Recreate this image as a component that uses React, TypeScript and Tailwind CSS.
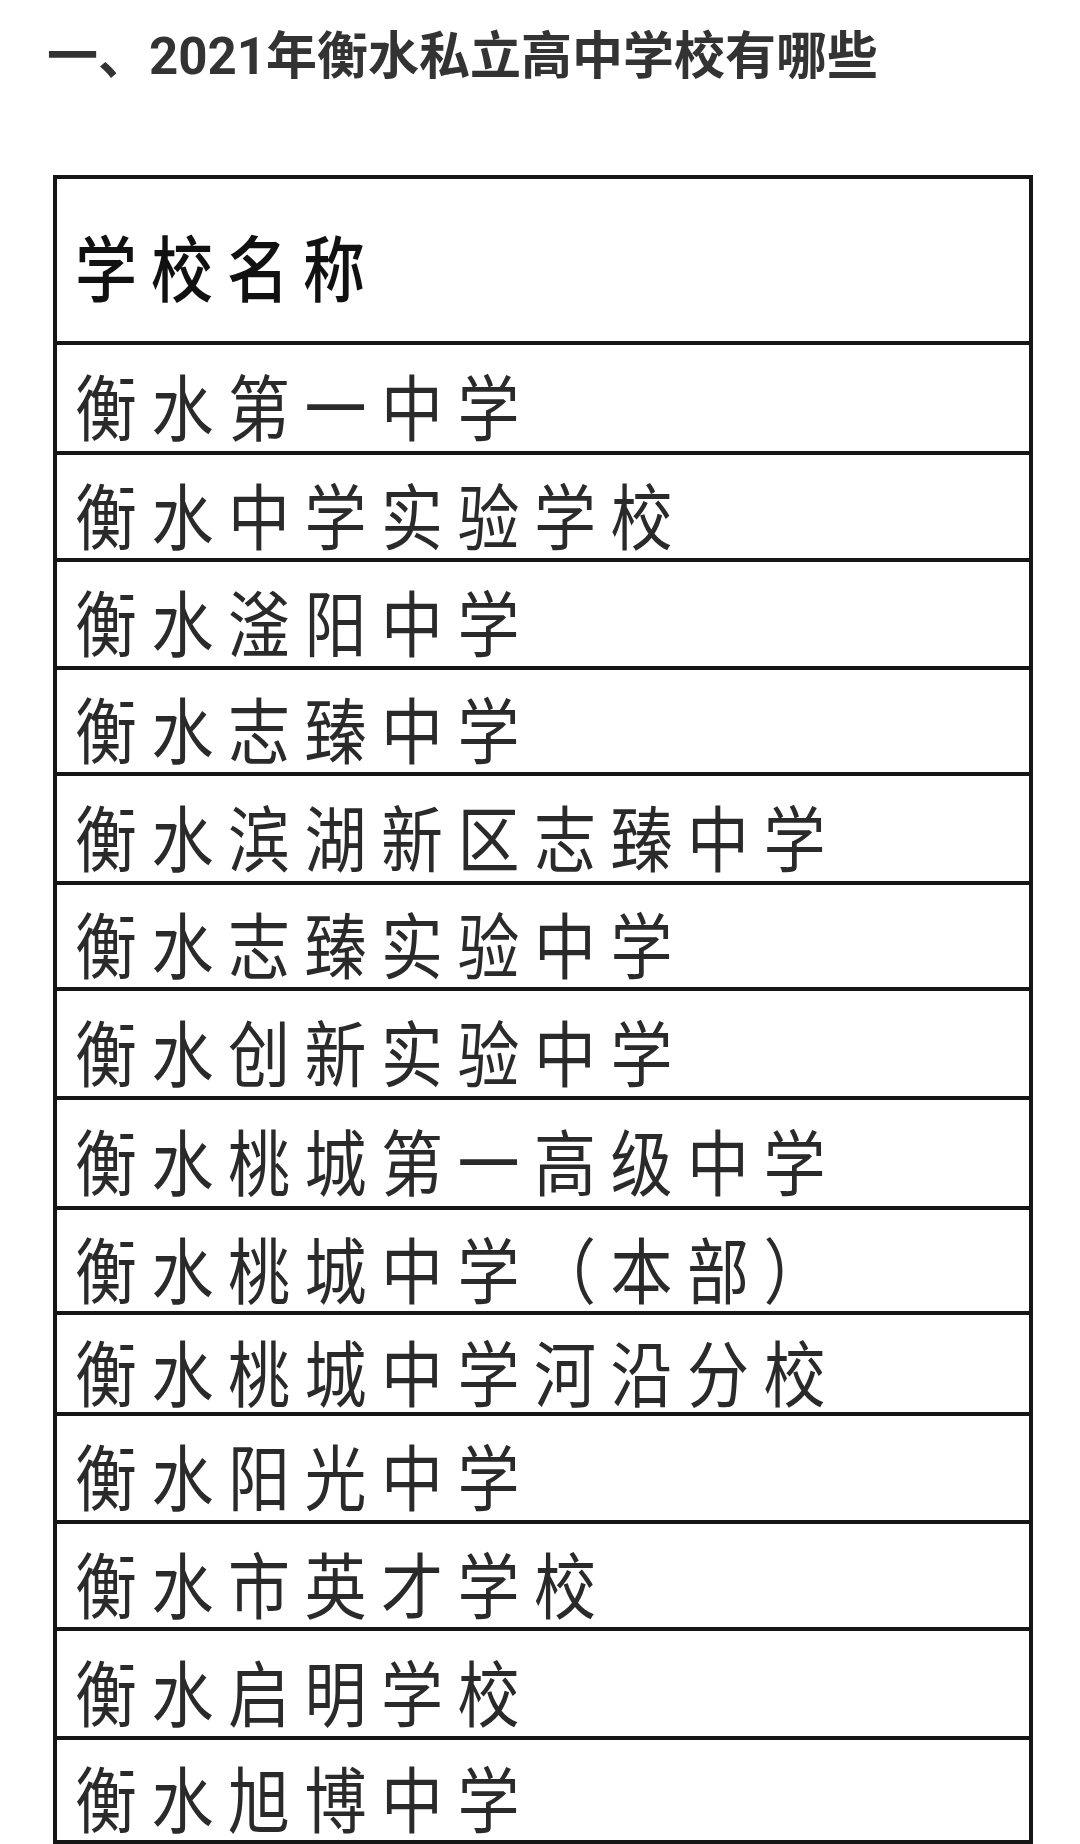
import React from "react";

const rows: { name: string; h: string }[] = [
  { name: "衡水第一中学", h: "h-[110px]" },
  { name: "衡水中学实验学校", h: "h-[107px]" },
  { name: "衡水滏阳中学", h: "h-[108px]" },
  { name: "衡水志臻中学", h: "h-[106px]" },
  { name: "衡水滨湖新区志臻中学", h: "h-[109px]" },
  { name: "衡水志臻实验中学", h: "h-[106px]" },
  { name: "衡水创新实验中学", h: "h-[109px]" },
  { name: "衡水桃城第一高级中学", h: "h-[110px]" },
  { name: "衡水桃城中学（本部）", h: "h-[105px]" },
  { name: "衡水桃城中学河沿分校", h: "h-[101px]" },
  { name: "衡水阳光中学", h: "h-[108px]" },
  { name: "衡水市英才学校", h: "h-[107px]" },
  { name: "衡水启明学校", h: "h-[109px]" },
  { name: "衡水旭博中学", h: "h-[104px]" },
];

export default function App() {
  return (
    <div className="w-[1080px] h-[1844px] bg-white overflow-hidden font-['Roboto','Noto_Sans_CJK_SC',sans-serif]">
      <div className="pt-[31px] pl-[47px]">
        <h1 className="text-[51px] leading-[51px] h-[51px] font-bold text-[#333333] whitespace-nowrap">
          一、2021年衡水私立高中学校有哪些
        </h1>
      </div>
      <div className="mt-[93px] ml-[53px] w-[980px] border-t-[4px] border-x-[4px] border-[#161616] flex flex-col font-['Noto_Sans_CJK_SC',sans-serif]">
        <div className="h-[166px] border-b-[4px] border-[#161616] flex items-center pl-[18px] pt-[10px]">
          <span className="inline-block text-[62px] leading-[62px] font-medium tracking-[14px] text-[#111111] scale-y-[1.15] blur-[0.5px] whitespace-nowrap">
            学校名称
          </span>
        </div>
        {rows.map((r) => (
          <div
            key={r.name}
            className={`${r.h} border-b-[4px] border-[#161616] flex items-center pl-[18px] pt-[12px]`}
          >
            <span className="inline-block text-[62px] leading-[62px] font-normal tracking-[14.5px] text-[#2a2a2a] scale-y-[1.15] blur-[0.5px] whitespace-nowrap">
              {r.name}
            </span>
          </div>
        ))}
      </div>
    </div>
  );
}
